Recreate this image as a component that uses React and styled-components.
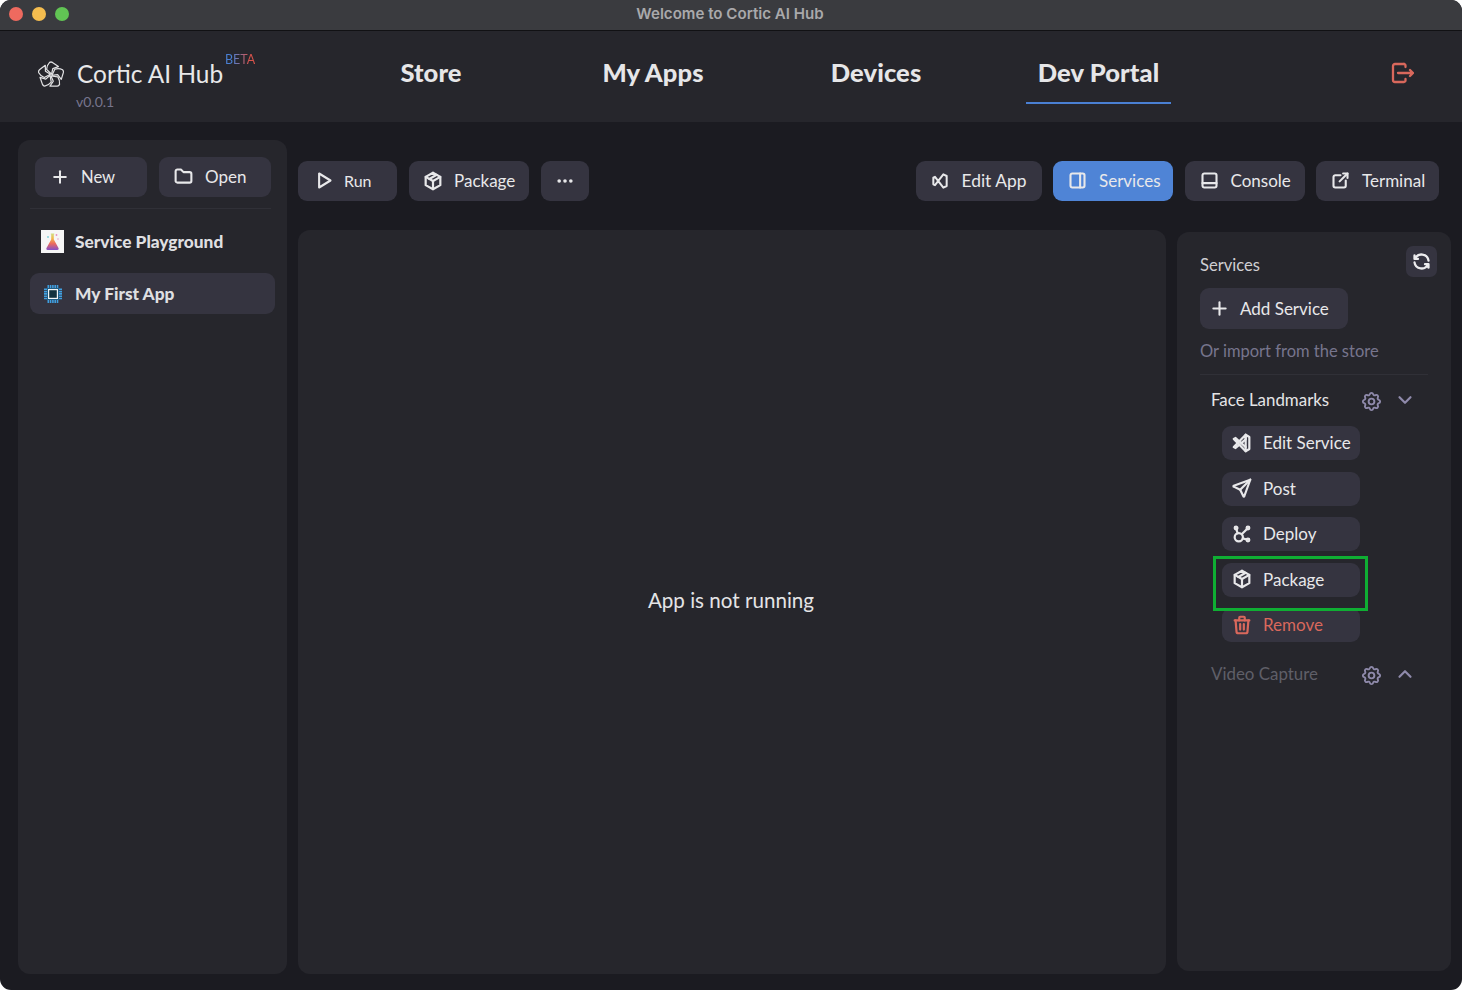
import React from "react";
import styled, { createGlobalStyle } from "styled-components";
import {
  TbPlus, TbFolder, TbPlayerPlay, TbPackage, TbDots, TbBrandVscode, TbLayoutSidebarRight,
  TbLayoutBottombar, TbExternalLink, TbRefresh, TbSettings, TbChevronDown, TbChevronUp,
  TbSend, TbAffiliate, TbTrash, TbBrandVisualStudio,
} from "react-icons/tb";

const Global = createGlobalStyle`
  html, body { margin: 0; padding: 0; background: #fff; }
  body { font-family: "Lato", "Noto Sans", sans-serif; }
`;

const Window = styled.div`
  width: 1462px;
  height: 990px;
  border-radius: 11px;
  overflow: hidden;
  background: #1b1b21;
  display: flex;
  flex-direction: column;
  position: relative;
`;

const TitleBar = styled.div`
  height: 26px;
  flex: none;
  background: #3a3b3f;
  border-bottom: 1px solid #111114;
  display: flex;
  align-items: center;
  justify-content: center;
  position: relative;
  color: #a9a9ab;
  font-family: "Inter", sans-serif;
  font-size: 15.1px;
  font-weight: 600;
  padding: 0 2px 4px 0;
  box-sizing: content-box;
`;

const Lights = styled.div`
  position: absolute;
  left: 9px;
  top: 7px;
  display: flex;
  gap: 9px;
`;

const Light = styled.span`
  width: 14px;
  height: 14px;
  border-radius: 50%;
  background: ${({ $c }) => $c};
`;

const Header = styled.header`
  height: 91px;
  flex: none;
  background: #26262c;
  display: flex;
  align-items: stretch;
  position: relative;
`;

const Brand = styled.div`
  width: 360px;
  padding: 29px 0 0 37px;
  display: flex;
  gap: 12px;
  box-sizing: border-box;
`;

const BrandText = styled.div`
  display: flex;
  flex-direction: column;
  position: relative;
`;

const BrandName = styled.div`
  color: #e8e8e9;
  font-size: 24.4px;
  line-height: 28px;
  white-space: nowrap;
`;

const Version = styled.div`
  color: #77758d;
  font-size: 14px;
  line-height: 16px;
  margin: 6px 0 0 -1px;
`;

const Beta = styled.span`
  position: absolute;
  left: 148px;
  top: -8px;
  font-size: 12.5px;
  line-height: 15px;
  background: linear-gradient(90deg, #4a80d4 25%, #d9534b 80%);
  -webkit-background-clip: text;
  background-clip: text;
  color: transparent;
`;

const Nav = styled.nav`
  display: flex;
  align-items: stretch;
  margin-left: 26px;
`;

const NavItem = styled.div`
  width: ${({ $w }) => $w}px;
  margin-right: ${({ $m }) => $m}px;
  height: 73px;
  display: flex;
  align-items: center;
  justify-content: center;
  padding-top: 10px;
  box-sizing: border-box;
  font-size: 25.5px;
  font-weight: 900;
  letter-spacing: 0.1px;
  color: #e6e6e8;
  border-bottom: 2px solid ${({ $active }) => ($active ? "#4a80d4" : "transparent")};
`;

const LogoutBtn = styled.div`
  position: absolute;
  right: 48px;
  top: 30px;
  color: #d9685c;
  display: flex;
`;

const Body = styled.div`
  flex: 1;
  display: flex;
  min-height: 0;
`;

const Sidebar = styled.aside`
  width: 269px;
  margin: 18px 0 16px 18px;
  background: #26262c;
  border-radius: 12px;
  padding: 17px 0 0 12px;
  box-sizing: border-box;
  flex: none;
`;

const SidebarActions = styled.div`
  display: flex;
  gap: 12px;
  padding: 0 0 11px 5px;
  margin-right: 16px;
  border-bottom: 1px solid #303037;
`;

const Button = styled.div`
  width: ${({ $w }) => ($w ? `${$w}px` : "auto")};
  height: ${({ $h }) => $h || 40}px;
  border-radius: 9px;
  background: ${({ $primary }) => ($primary ? "#4f84d6" : "#353440")};
  color: ${({ $danger }) => ($danger ? "#d9685c" : "#e8e8ea")};
  display: flex;
  align-items: center;
  gap: ${({ $gap }) => $gap || 14}px;
  padding-left: ${({ $pad }) => $pad || 15}px;
  padding-bottom: 1px;
  box-sizing: border-box;
  font-size: ${({ $fs }) => $fs || 17}px;
  white-space: nowrap;
  flex: none;
  svg { flex: none; stroke-width: 2.4; }
`;

const AppItem = styled.div`
  height: 41px;
  width: 245px;
  margin-top: ${({ $mt }) => $mt}px;
  border-radius: 9px;
  background: ${({ $active }) => ($active ? "#353440" : "transparent")};
  display: flex;
  align-items: center;
  gap: 11px;
  padding-left: 11px;
  box-sizing: border-box;
  color: #dfdfe1;
  font-weight: 900;
  font-size: 17.3px;
`;

const AppIconBox = styled.div`
  width: 23px;
  height: 23px;
  background: ${({ $white }) => ($white ? "#f6f6f6" : "transparent")};
  display: flex;
  align-items: center;
  justify-content: center;
  flex: none;
`;

const Workspace = styled.div`
  flex: 1;
  display: flex;
  flex-direction: column;
  padding: 39px 11px 16px 11px;
  min-width: 0;
`;

const Toolbar = styled.div`
  display: flex;
  justify-content: space-between;
  padding-right: 12px;
  margin-bottom: 29px;
`;

const ToolGroup = styled.div`
  display: flex;
  gap: ${({ $gap }) => $gap}px;
`;

const Content = styled.div`
  flex: 1;
  display: flex;
  gap: 11px;
  min-height: 0;
`;

const Stage = styled.main`
  width: 868px;
  flex: none;
  background: #26262c;
  border-radius: 12px;
  display: flex;
  align-items: center;
  justify-content: center;
  color: #e4e4e6;
  font-size: 20.6px;
  padding: 0 2px 4px 0;
  box-sizing: border-box;
`;

const ServicesPanel = styled.section`
  width: 274px;
  flex: none;
  margin: 2px 0 3px;
  background: #26262c;
  border-radius: 12px;
  padding: 14px 14px 0 23px;
  box-sizing: border-box;
  position: relative;
`;

const PanelTop = styled.div`
  display: flex;
  justify-content: space-between;
  align-items: flex-end;
  height: 31px;
  margin-bottom: 11px;
`;

const PanelTitle = styled.div`
  color: #cfcfd2;
  font-size: 16.6px;
  line-height: 20px;
  margin-bottom: 2px;
`;

const IconButton = styled.div`
  width: 31px;
  height: 31px;
  border-radius: 7px;
  background: #353440;
  color: #ececee;
  display: flex;
  align-items: center;
  justify-content: center;
  svg { stroke-width: 2.6; }
`;

const ImportHint = styled.div`
  color: #77758d;
  font-size: 16.5px;
  line-height: 20px;
  margin-top: 12px;
  padding-bottom: 13px;
  margin-right: 9px;
  border-bottom: 1px solid #303037;
`;

const ServiceRow = styled.div`
  display: flex;
  align-items: center;
  height: 26px;
  margin-top: ${({ $mt }) => $mt}px;
  padding-left: 11px;
  color: ${({ $dim }) => ($dim ? "#5f5f68" : "#e4e4e6")};
  font-size: 16.9px;
`;

const ServiceName = styled.span`
  width: 149px;
  margin-top: -2px;
`;

const RowIcon = styled.span`
  color: #8f8aab;
  display: flex;
  width: 35px;
  svg { margin-top: 3px; stroke-width: 2; }
`;

const Chevron = styled.span`
  color: #8f8aab;
  display: flex;
  margin-left: -1px;
  svg { stroke-width: 2.4; }
`;

const ServiceActions = styled.div`
  display: flex;
  flex-direction: column;
  gap: 11.6px;
  margin: 13px 0 0 22px;
`;

const Highlight = styled.div`
  position: absolute;
  left: 36px;
  top: 324px;
  width: 155px;
  height: 55px;
  border: 3px solid #0fae33;
  box-sizing: border-box;
  pointer-events: none;
`;

const LogoMark = () => (
  <svg width="28" height="28" viewBox="0 0 28 28" fill="none" stroke="#e0e0e2" strokeWidth="1.25" strokeLinejoin="round" style={{ flex: "none" }}>
    {[0, 72, 144, 216, 288].map((r) => (
      <path key={r} transform={`rotate(${r} 14 15)`} d="M12.6 2.4 Q14 1.6 15.4 2.4 L21.4 6.6 L15.8 8.6 L14.6 14.2 L9.6 9.4 Q10 5 12.6 2.4Z" />
    ))}
  </svg>
);

const LogoutIcon = () => (
  <svg width="24" height="24" viewBox="0 0 24 24" fill="none" stroke="currentColor" strokeWidth="2.3" strokeLinecap="round" strokeLinejoin="round">
    <path d="M14 3H5a2 2 0 0 0-2 2v14a2 2 0 0 0 2 2h9a1.5 1.5 0 0 0 1.5-1.5V18" />
    <path d="M15.5 6V4.5A1.5 1.5 0 0 0 14 3" />
    <path d="M8 12h15M20 9l3 3-3 3" />
  </svg>
);

const FlaskIcon = () => (
  <svg width="23" height="23" viewBox="0 0 23 23">
    <defs>
      <linearGradient id="flask" x1="0" y1="0" x2="0" y2="1">
        <stop offset="0" stopColor="#cfe08a" />
        <stop offset="0.3" stopColor="#f2b84b" />
        <stop offset="0.62" stopColor="#ec6a5e" />
        <stop offset="1" stopColor="#8450c8" />
      </linearGradient>
    </defs>
    <path d="M9.8 3.4h3.4v1h-.4v5l4.7 8.6c.5 1-.1 2-1.2 2H6.7c-1.1 0-1.7-1-1.2-2l4.7-8.6v-5h-.4z" fill="url(#flask)" />
    <circle cx="15.5" cy="5" r="0.9" fill="#e88bc0" />
    <circle cx="7" cy="7" r="0.9" fill="#7ad0d8" />
    <circle cx="17" cy="9" r="0.7" fill="#e88bc0" />
  </svg>
);

const ChipIcon = () => (
  <svg width="18" height="18" viewBox="0 0 18 18" fill="none">
    <path d="M3.5 1.5h11M3.5 16.5h11M1.5 3.5v11M16.5 3.5v11" stroke="#3f9fe0" strokeWidth="3" strokeDasharray="1.6 0.7" />
    <rect x="3" y="3" width="12" height="12" fill="#1f5f86" />
    <rect x="4.6" y="4.6" width="8.8" height="8.8" fill="#12323f" stroke="#f0f4f6" strokeWidth="1.2" />
  </svg>
);

const serviceButtons = [
  { label: "Edit Service", icon: <TbBrandVscode size={22} /> },
  { label: "Post", icon: <TbSend size={22} /> },
  { label: "Deploy", icon: <TbAffiliate size={22} /> },
  { label: "Package", icon: <TbPackage size={22} /> },
  { label: "Remove", icon: <TbTrash size={22} />, danger: true },
];

export default function App() {
  return (
    <>
      <Global />
      <Window>
        <TitleBar>
          <Lights>
            <Light $c="#ee6a5f" />
            <Light $c="#f5bd4f" />
            <Light $c="#61c454" />
          </Lights>
          Welcome to Cortic AI Hub
        </TitleBar>
        <Header>
          <Brand>
            <LogoMark />
            <BrandText>
              <BrandName>Cortic AI Hub</BrandName>
              <Beta>BETA</Beta>
              <Version>v0.0.1</Version>
            </BrandText>
          </Brand>
          <Nav>
            <NavItem $w={90} $m={126}>Store</NavItem>
            <NavItem $w={102} $m={126}>My Apps</NavItem>
            <NavItem $w={92} $m={104}>Devices</NavItem>
            <NavItem $w={145} $m={0} $active>Dev Portal</NavItem>
          </Nav>
          <LogoutBtn><LogoutIcon /></LogoutBtn>
        </Header>
        <Body>
          <Sidebar>
            <SidebarActions>
              <Button $w={112} $gap={11} $pad={15} $fs={16.6}><TbPlus size={20} />New</Button>
              <Button $w={112} $gap={11} $pad={14}><TbFolder size={21} />Open</Button>
            </SidebarActions>
            <AppItem $mt={12}>
              <AppIconBox $white><FlaskIcon /></AppIconBox>
              Service Playground
            </AppItem>
            <AppItem $mt={11} $active>
              <AppIconBox><ChipIcon /></AppIconBox>
              My First App
            </AppItem>
          </Sidebar>
          <Workspace>
            <Toolbar>
              <ToolGroup $gap={12}>
                <Button $w={99} $gap={10} $fs={16}><TbPlayerPlay size={21} />Run</Button>
                <Button $w={120} $gap={10} $pad={13}><TbPackage size={22} />Package</Button>
                <Button $w={48} $pad={14}><TbDots size={20} /></Button>
              </ToolGroup>
              <ToolGroup $gap={11.5}>
                <Button $w={126} $gap={12} $pad={14} $fs={17.4}><TbBrandVisualStudio size={20} />Edit App</Button>
                <Button $w={120} $gap={11} $pad={14} $primary><TbLayoutSidebarRight size={21} />Services</Button>
                <Button $w={120} $gap={11} $pad={14}><TbLayoutBottombar size={21} />Console</Button>
                <Button $w={123} $gap={11} $pad={14}><TbExternalLink size={21} />Terminal</Button>
              </ToolGroup>
            </Toolbar>
            <Content>
              <Stage>App is not running</Stage>
              <ServicesPanel>
                <PanelTop>
                  <PanelTitle>Services</PanelTitle>
                  <IconButton><TbRefresh size={21} /></IconButton>
                </PanelTop>
                <Button $w={148} $h={41} $pad={9} $gap={10}><TbPlus size={21} />Add Service</Button>
                <ImportHint>Or import from the store</ImportHint>
                <ServiceRow $mt={12}>
                  <ServiceName>Face Landmarks</ServiceName>
                  <RowIcon><TbSettings size={23} /></RowIcon>
                  <Chevron><TbChevronDown size={22} /></Chevron>
                </ServiceRow>
                <ServiceActions>
                  {serviceButtons.map((b) => (
                    <Button key={b.label} $w={138} $h={34} $pad={9} $gap={10} $danger={b.danger}>
                      {b.icon}
                      {b.label}
                    </Button>
                  ))}
                </ServiceActions>
                <ServiceRow $mt={19} $dim>
                  <ServiceName>Video Capture</ServiceName>
                  <RowIcon><TbSettings size={23} /></RowIcon>
                  <Chevron><TbChevronUp size={22} /></Chevron>
                </ServiceRow>
                <Highlight />
              </ServicesPanel>
            </Content>
          </Workspace>
        </Body>
      </Window>
    </>
  );
}
